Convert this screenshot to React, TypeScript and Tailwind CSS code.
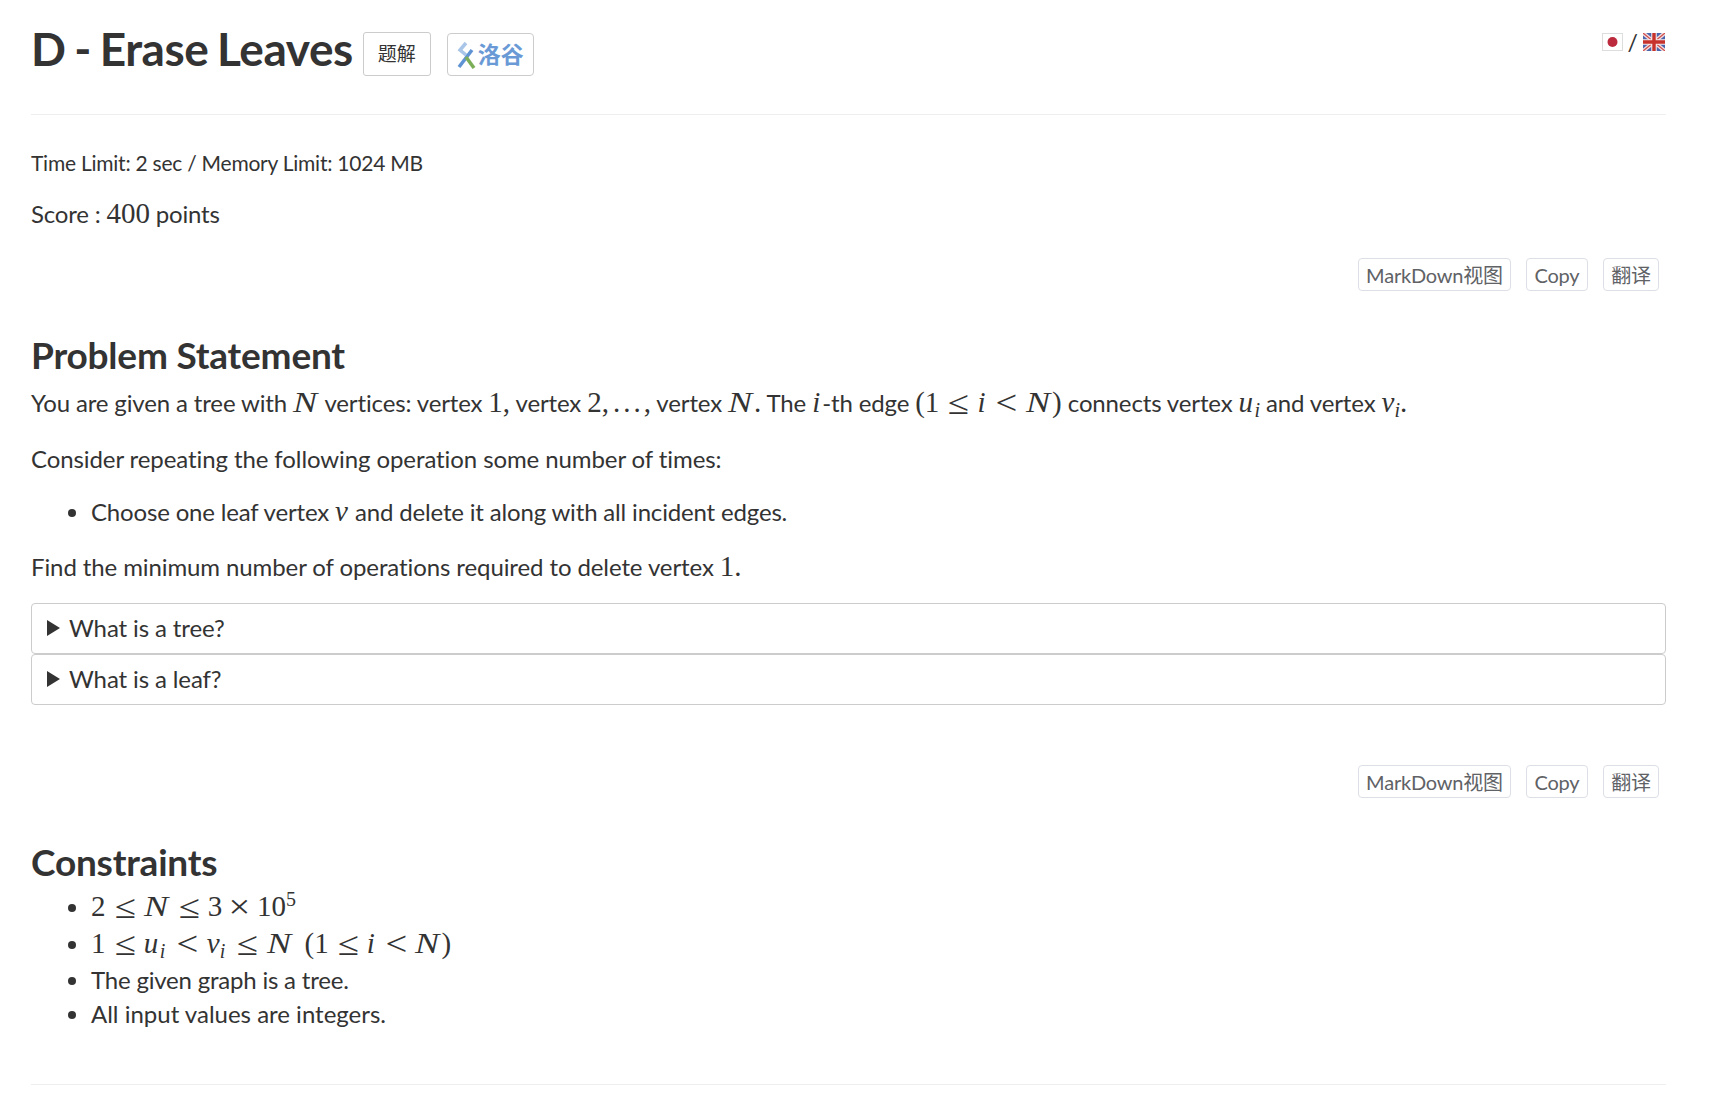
import type { ReactNode } from 'react'

const LATO = 'font-["Lato","Noto_Sans_CJK_SC",sans-serif]'

function M({ children }: { children: ReactNode }) {
  return <span className='font-["Liberation_Serif",serif] text-[29px] leading-none tracking-normal'>{children}</span>
}

function I({ children, className }: { children: ReactNode; className: string }) {
  return <i className={`inline-block ${className}`}>{children}</i>
}

// KaTeX italics are wider than Liberation Serif, so N gets stretched a little
function N() {
  return <i className="inline-block w-[26px] origin-left scale-x-[1.25]">N</i>
}

function Vi({ v, gap = 'mr-[3px]' }: { v: string; gap?: string }) {
  return (
    <>
      <I className={v === 'u' ? 'w-[17px]' : 'w-[14px]'}>{v}</I>
      <sub className={`-ml-[1px] text-[20px] italic leading-none ${gap}`}>i</sub>
    </>
  )
}

function Op({ children, className = 'mx-[10px]' }: { children: ReactNode; className?: string }) {
  return <span className={`relative top-[2px] inline-block scale-x-[1.17] text-[33px] leading-[0] ${className}`}>{children}</span>
}

function ToolRow({ className = '' }: { className?: string }) {
  const items = [
    ['MarkDown视图', 'w-[153px]'],
    ['Copy', 'w-[62px]'],
    ['翻译', 'w-[56px]'],
  ]
  return (
    <div className={`flex justify-end gap-[15px] pr-[7px] ${className}`}>
      {items.map(([t, w]) => (
        <button
          key={t}
          className={`flex h-[33px] items-center justify-center rounded-[4px] border border-[#dcdfe6] bg-white text-[20px] tracking-[-0.2px] text-[#606266] ${w}`}
        >
          {t}
        </button>
      ))}
    </div>
  )
}

function Fold({ title }: { title: string }) {
  return (
    <div className="flex h-[51px] items-center rounded-[4px] border border-[#ccc] px-[15px] pb-[2px] text-[24px] tracking-[-0.12px]">
      <span className="mr-[9px] h-0 w-0 border-y-[8px] border-l-[13px] border-y-transparent border-l-[#333]" />
      {title}
    </div>
  )
}

function Flags() {
  return (
    <div className="mr-[1px] mt-[33px] flex items-start text-[23px] leading-[18px]">
      <svg width="21" height="18" viewBox="0 0 21 18">
        <rect x="0.5" y="0.5" width="20" height="17" fill="#fff" stroke="#ddd" />
        <circle cx="10.5" cy="9" r="5" fill="#bc2a3d" />
      </svg>
      <span className="mx-[5px] text-[#333]">/</span>
      <svg width="22" height="18" viewBox="0 0 22 18">
        <rect width="22" height="18" fill="#4a64ad" />
        <path d="M0 0L22 18M22 0L0 18" stroke="#f3dcdc" strokeWidth="4" />
        <path d="M0 0L22 18M22 0L0 18" stroke="#cf4a4a" strokeWidth="1.2" />
        <path d="M11 0V18M0 9H22" stroke="#f6eaea" strokeWidth="5.5" />
        <path d="M11 0V18M0 9H22" stroke="#c8322c" strokeWidth="3.4" />
      </svg>
    </div>
  )
}

export default function App() {
  return (
    <div className={`${LATO} h-[1099px] overflow-hidden bg-white pl-[31px] pr-[48px] text-[24px] text-[#333]`}>
      <div className="flex h-[115px] justify-between border-b border-[#eee]">
        <div className="flex items-start">
          <h1 className="mt-[22px] text-[46px] font-bold leading-[54px] tracking-[-0.45px] [word-spacing:-2px]">D - Erase Leaves</h1>
          <button className="ml-[10px] mt-[32px] flex h-[44px] w-[68px] items-center justify-center rounded-[3px] border border-[#ccc] text-[19px] text-[#333]">
            题解
          </button>
          <button className="ml-[16px] mt-[33px] flex h-[43px] w-[87px] items-center justify-center gap-[1px] rounded-[4px] border border-[#ccc] text-[23px] font-bold text-[#6a9ad6]">
            <svg width="20" height="28" viewBox="0 0 20 28">
              <path d="M9 2L3 9L9 14" fill="none" stroke="#a9c6e8" strokeWidth="3.5" />
              <path d="M15 9L2 26" fill="none" stroke="#5f93d3" strokeWidth="3.5" />
              <path d="M9 16L17 27" fill="none" stroke="#7cae58" strokeWidth="3.5" />
            </svg>
            洛谷
          </button>
        </div>
        <Flags />
      </div>

      <p className="mt-[34px] text-[21px] leading-[28px] tracking-[-0.24px]">Time Limit: 2 sec / Memory Limit: 1024 MB</p>
      <p className="mt-[20px] leading-[34px] tracking-[-0.2px]">
        Score : <M>400</M> points
      </p>

      <ToolRow className="mt-[27px]" />

      <h3 className="mt-[42px] text-[37px] font-bold leading-[44px] tracking-[-0.2px]">Problem Statement</h3>
      <p className="mt-[9px] leading-[34px] tracking-[-0.14px]">
        You are given a tree with <M><N /></M> vertices: vertex <M>1,</M> vertex <M>2,<span className="ml-[4px] tracking-[3px]">...</span>,</M> vertex{' '}
        <M><N />.</M> The <M><I className="w-[10px]">i</I></M>-th edge{' '}
        <M>(1<Op>≤</Op><I className="w-[10px]">i</I><Op>&lt;</Op><N />)</M> connects vertex <M><Vi v="u" gap="mr-0" /></M> and vertex{' '}
        <M><Vi v="v" gap="mr-0" />.</M>
      </p>
      <p className="mt-[24px] leading-[30px] tracking-[-0.09px]">Consider repeating the following operation some number of times:</p>
      <ul className="mt-[23px] list-disc pl-[60px] leading-[30px] tracking-[-0.17px]">
        <li>
          Choose one leaf vertex <M><I className="w-[14px]">v</I></M> and delete it along with all incident edges.
        </li>
      </ul>
      <p className="mt-[25px] leading-[30px] tracking-[-0.1px]">
        Find the minimum number of operations required to delete vertex <M>1.</M>
      </p>

      <div className="mt-[21px]">
        <Fold title="What is a tree?" />
        <Fold title="What is a leaf?" />
      </div>

      <ToolRow className="mt-[60px]" />

      <h3 className="mt-[42px] text-[37px] font-bold leading-[44px] tracking-[-0.2px]">Constraints</h3>
      <ul className="mt-[4px] list-disc pl-[60px]">
        <li className="h-[37px] leading-[37px]">
          <M>2<Op>≤</Op><N /><Op>≤</Op>3<Op className="mx-[8px]">×</Op>10<sup className="text-[20px] leading-none">5</sup></M>
        </li>
        <li className="h-[38px] leading-[38px]">
          <M>1<Op>≤</Op><Vi v="u" /><Op>&lt;</Op><Vi v="v" /><Op>≤</Op><N /><span className="ml-[12px]">(</span>1<Op>≤</Op><I className="w-[10px]">i</I><Op>&lt;</Op><N />)</M>
        </li>
        <li className="h-[34px] leading-[34px] tracking-[-0.2px]">The given graph is a tree.</li>
        <li className="h-[34px] leading-[34px]">All input values are integers.</li>
      </ul>
      <div className="mt-[53px] border-b border-[#eee]" />
    </div>
  )
}
